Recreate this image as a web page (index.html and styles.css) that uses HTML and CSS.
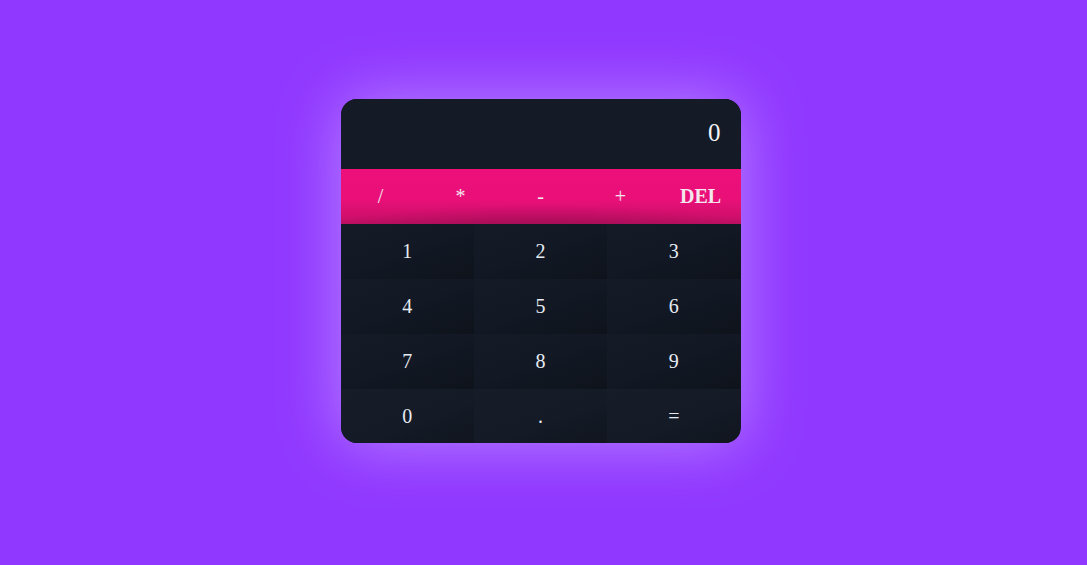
FILE: index.html
```html
<!DOCTYPE html>
<html>
<head>
<meta charset="utf-8">
<link rel="stylesheet" href="styles.css">
</head>
<body>
<div class="calculator">
  <div class="display">0</div>
  <div class="operators">
    <button class="op">/</button>
    <button class="op">*</button>
    <button class="op">-</button>
    <button class="op">+</button>
    <button class="op del">DEL</button>
  </div>
  <div class="digits">
    <button class="digit">1</button>
    <button class="digit">2</button>
    <button class="digit">3</button>
    <button class="digit">4</button>
    <button class="digit">5</button>
    <button class="digit">6</button>
    <button class="digit">7</button>
    <button class="digit">8</button>
    <button class="digit">9</button>
    <button class="digit">0</button>
    <button class="digit">.</button>
    <button class="digit">=</button>
  </div>
</div>
</body>
</html>
```
FILE: styles.css
```css
* { box-sizing: border-box; }
html, body { margin: 0; padding: 0; }
body {
  background: #9038ff;
  min-height: 100vh;
  display: flex;
  justify-content: center;
  align-items: flex-start;
  padding: 99px 6px 0 0;
  font-family: "Liberation Serif", "DejaVu Serif", serif;
}
.calculator {
  width: 400px;
  border-radius: 16px;
  overflow: hidden;
  background: #141b26;
  box-shadow: 0 0 64px #b884ff;
}
.display {
  height: 70px;
  padding: 20px 20px 0 0;
  text-align: right;
  color: #f2f4f8;
  font-size: 25px;
  line-height: 28px;
  background: #141b26;
}
.operators {
  display: flex;
  background:
    radial-gradient(ellipse 55% 45% at 50% 110%, rgba(140, 12, 75, 0.6), rgba(140, 12, 75, 0) 100%),
    linear-gradient(to bottom, #ee0f7a 0%, #e91078 55%, #d20f6d 85%, #bd0f62 100%);
}
button {
  appearance: none;
  border: none;
  outline: none;
  margin: 0;
  font-family: "Liberation Serif", "DejaVu Serif", serif;
  font-size: 20px;
  line-height: 23px;
  padding: 16px;
  color: #e6ebf2;
  cursor: pointer;
}
.op {
  flex: 1 1 0;
  background: transparent;
  color: #f3e6ee;
}
.del { font-weight: bold; }
.digits {
  display: flex;
  flex-wrap: wrap;
}
.digit {
  flex: 0 0 33.333%;
  height: 55px;
  background: linear-gradient(160deg, #141b26 0%, #121824 50%, #0e131b 100%);
}
.digits .digit:nth-child(n+10) { height: 54px; background: linear-gradient(160deg, #161d29 0%, #141a26 60%, #10151e 100%); }
```
